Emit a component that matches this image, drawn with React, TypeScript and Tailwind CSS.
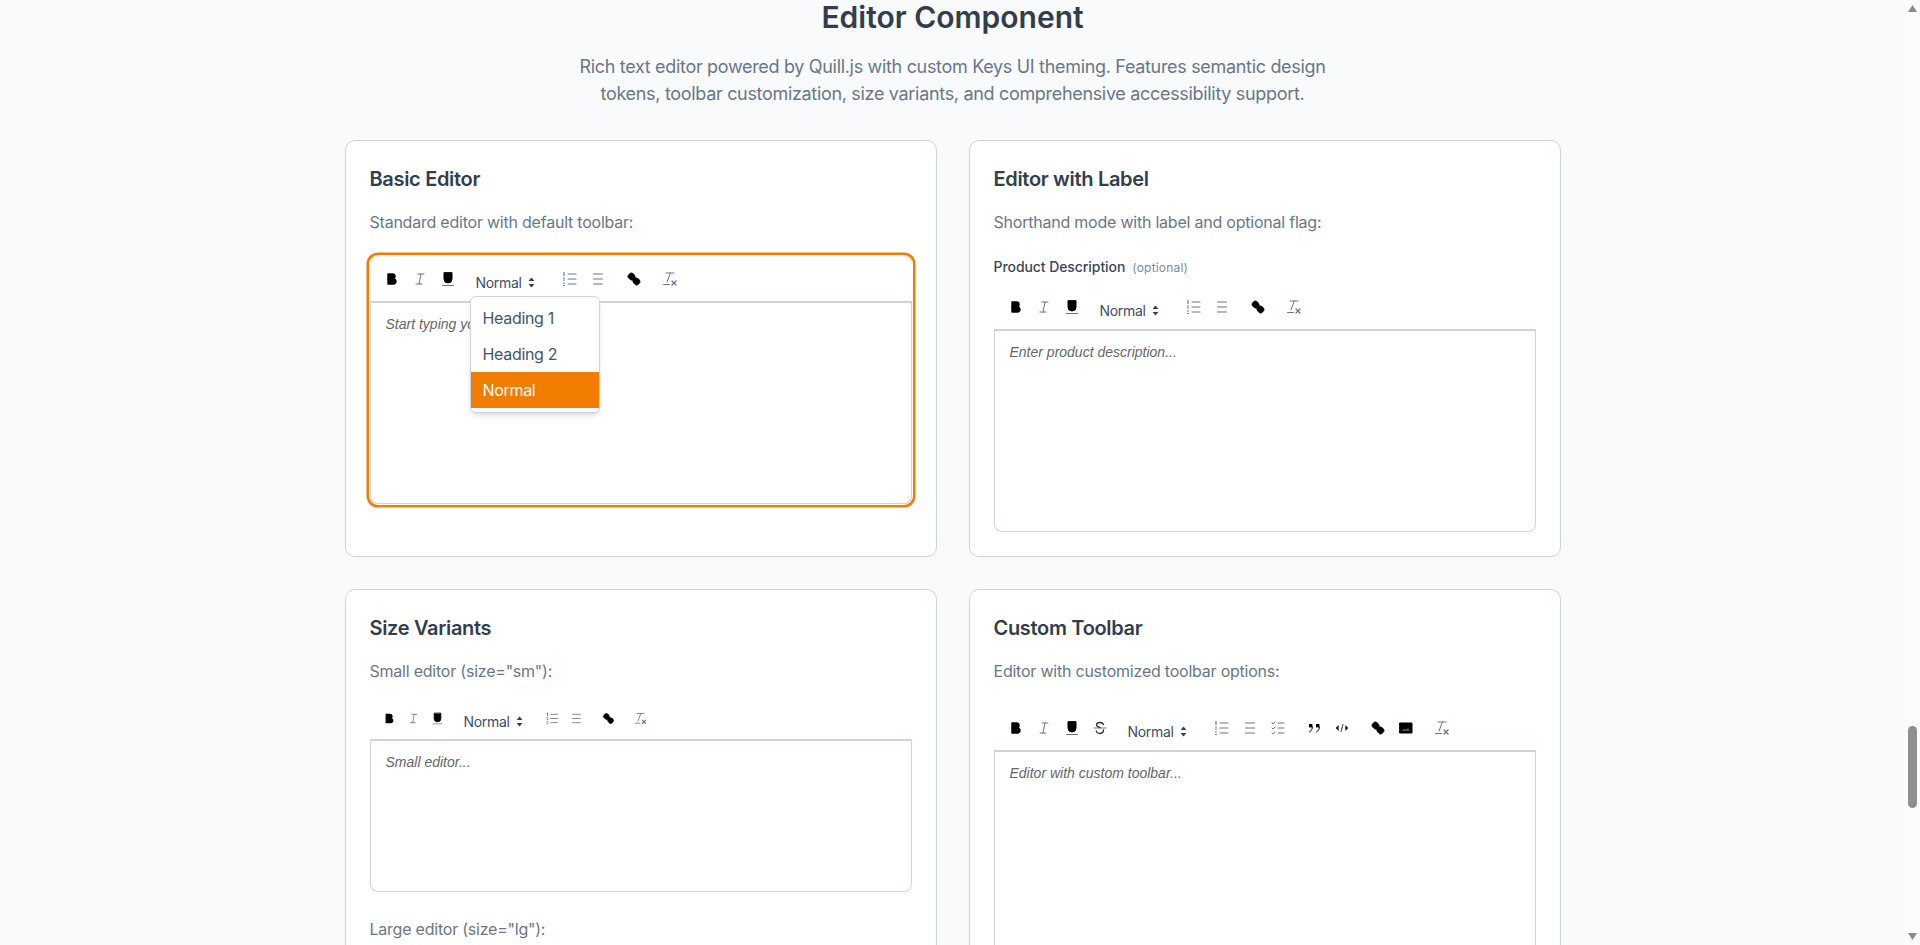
type ToolName =
  | "bold" | "italic" | "underline" | "strike" | "ordered" | "bullet"
  | "check" | "quote" | "code" | "link" | "image" | "clean"

const stroke = "#64748b"

function ToolIcon({ name, small }: { name: ToolName; small?: boolean }) {
  const cls = small ? "w-[15px] h-[15px]" : "w-[18px] h-[18px]"
  return (
    <svg viewBox="0 0 18 18" className={cls} fill="none" stroke={stroke} strokeLinecap="round" strokeLinejoin="round">
      {name === "bold" && (
        <g fill="#000" stroke="#000" strokeWidth="1.4">
          <path d="M5,4H9.5A2.5,2.5,0,0,1,12,6.5v0A2.5,2.5,0,0,1,9.5,9H5V4Z" />
          <path d="M5,9h5.5A2.5,2.5,0,0,1,13,11.5v0A2.5,2.5,0,0,1,10.5,14H5V9Z" />
        </g>
      )}
      {name === "italic" && (
        <g>
          <line x1="7" x2="13" y1="4" y2="4" />
          <line x1="5" x2="11" y1="14" y2="14" />
          <line x1="8" x2="10" y1="14" y2="4" />
        </g>
      )}
      {name === "underline" && (
        <g>
          <path d="M5,3V9a4,4,0,0,0,4,4H9a4,4,0,0,0,4-4V3Z" fill="#000" stroke="#000" />
          <rect x="3" y="15" width="12" height="1" rx="0.5" fill={stroke} stroke="none" />
        </g>
      )}
      {name === "strike" && (
        <g>
          <line x1="3" x2="15" y1="9" y2="9" />
          <path d="M12.5,5.5C12,4 10.5,3.5 9,3.5C7,3.5 5.5,4.5 5.5,6C5.5,7.5 7,8 9,8.5" stroke="#333" strokeWidth="1.3" />
          <path d="M12.5,11C12.7,13 11,14.5 9,14.5C7,14.5 5.6,13.6 5.3,12" stroke="#333" strokeWidth="1.3" />
        </g>
      )}
      {name === "ordered" && (
        <g>
          <line x1="7" x2="15" y1="4" y2="4" />
          <line x1="7" x2="15" y1="9" y2="9" />
          <line x1="7" x2="15" y1="14" y2="14" />
          <line x1="3" x2="3" y1="2.5" y2="5.5" strokeWidth="1.2" />
          <line x1="2.5" x2="3.5" y1="8" y2="8" strokeWidth="1.2" />
          <line x1="2.5" x2="3.5" y1="10" y2="10" strokeWidth="1.2" />
          <line x1="2.5" x2="3.5" y1="13" y2="13" strokeWidth="1.2" />
          <line x1="2.5" x2="3.5" y1="15.5" y2="15.5" strokeWidth="1.2" />
        </g>
      )}
      {name === "bullet" && (
        <g>
          <line x1="4.5" x2="13.5" y1="4" y2="4" />
          <line x1="4.5" x2="13.5" y1="9" y2="9" />
          <line x1="4.5" x2="13.5" y1="14" y2="14" />
        </g>
      )}
      {name === "check" && (
        <g>
          <line x1="9" x2="15" y1="4" y2="4" />
          <polyline points="3 4 4 5 6 3" />
          <line x1="9" x2="15" y1="14" y2="14" />
          <polyline points="3 14 4 15 6 13" />
          <line x1="9" x2="15" y1="9" y2="9" />
          <polyline points="3 9 4 10 6 8" />
        </g>
      )}
      {name === "quote" && (
        <g fill="#000" stroke="none">
          <rect x="4" y="5" width="3.4" height="3.4" />
          <rect x="11" y="5" width="3.4" height="3.4" />
          <path d="M7.4,8c0,4.031-3,5-3,5" fill="none" stroke="#000" />
          <path d="M14.4,8c0,4.031-3,5-3,5" fill="none" stroke="#000" />
        </g>
      )}
      {name === "code" && (
        <g stroke="#333">
          <polygon points="5 7 3 9 5 11" fill="#333" />
          <polygon points="13 7 15 9 13 11" fill="#333" />
          <line x1="10" x2="8" y1="5.5" y2="12.5" />
        </g>
      )}
      {name === "link" && (
        <g fill="#000" stroke="#000">
          <line x1="7" x2="11" y1="7" y2="11" />
          <path d="M8.9,4.577a3.476,3.476,0,0,1,.36,4.679A3.476,3.476,0,0,1,4.577,8.9C3.185,7.5,2.035,6.4,4.217,4.217S7.5,3.185,8.9,4.577Z" />
          <path d="M13.423,9.1a3.476,3.476,0,0,0-4.679-.36,3.476,3.476,0,0,0,.36,4.679c1.392,1.392,2.5,2.542,4.679.36S14.815,10.5,13.423,9.1Z" />
        </g>
      )}
      {name === "image" && (
        <g>
          <rect x="3" y="4" width="12" height="10" fill="#000" stroke="#000" />
          <polyline points="5 12 7 9.5 8.5 10.5 11 9 13 12 5 12" fill="#475569" stroke="none" />
        </g>
      )}
      {name === "clean" && (
        <g>
          <line x1="5" x2="13" y1="3" y2="3" />
          <line x1="6" x2="9.35" y1="12" y2="3" />
          <line x1="11" x2="15" y1="11" y2="15" strokeWidth="1.3" />
          <line x1="15" x2="11" y1="11" y2="15" strokeWidth="1.3" />
          <rect x="2" y="14" width="7" height="1" rx="0.5" fill={stroke} stroke="none" />
        </g>
      )}
    </svg>
  )
}

function Picker({ small }: { small?: boolean }) {
  return (
    <div className={`flex items-center pl-[6px] pt-[6px] text-[14px] leading-[17px] text-[#3f4d63] ${small ? "w-[75px] h-5" : "w-[78px] h-6"}`}>
      <span>Normal</span>
      <svg viewBox="0 0 7 11" className="ml-[6px] w-[7px] h-[11px]" fill="#334155">
        <polygon points="3.5 0.5 6.5 4 0.5 4" />
        <polygon points="3.5 10.5 6.5 7 0.5 7" />
      </svg>
    </div>
  )
}

function Toolbar({ groups, small }: { groups: (ToolName[] | "picker")[]; small?: boolean }) {
  return (
    <div className={`flex items-center gap-2 px-2 ${small ? "pt-[3px] pb-[11px]" : "pt-[11px] pb-[10px]"}`}>
      {groups.map((group, i) =>
        group === "picker" ? (
          <Picker key={i} small={small} />
        ) : (
          <div key={i} className="flex">
            {group.map((name) => (
              <div key={name} className={`flex items-center justify-center ${small ? "w-6 h-5" : "w-7 h-6"}`}>
                <ToolIcon name={name} small={small} />
              </div>
            ))}
          </div>
        )
      )}
    </div>
  )
}

const defaultTools: (ToolName[] | "picker")[] = [
  ["bold", "italic", "underline"],
  "picker",
  ["ordered", "bullet"],
  ["link"],
  ["clean"],
]

const customTools: (ToolName[] | "picker")[] = [
  ["bold", "italic", "underline", "strike"],
  "picker",
  ["ordered", "bullet", "check"],
  ["quote", "code"],
  ["link", "image"],
  ["clean"],
]

function Editor({
  placeholder,
  tools = defaultTools,
  small,
  heightClass = "h-[203px]",
  focused,
}: {
  placeholder: string
  tools?: (ToolName[] | "picker")[]
  small?: boolean
  heightClass?: string
  focused?: boolean
}) {
  return (
    <div className={`relative rounded-lg ${focused ? "shadow-[0_0_0_1px_#fff,0_0_0_3.5px_#f07c00]" : ""}`}>
      <Toolbar groups={tools} small={small} />
      <div className={`border border-t-2 border-[#cbd5e1] rounded-b-lg bg-white px-[15px] pt-[11px] ${heightClass}`}>
        <p className="font-['Liberation_Sans',Arial,sans-serif] tracking-normal italic text-[14px] leading-[21px] text-[#666]">{placeholder}</p>
      </div>
      {focused && (
        <div className="absolute left-[100px] top-[40px] w-[130px] h-[117px] rounded-md border border-[#cbd5e1] bg-white py-[3px] text-[16px] text-[#475569] shadow-md">
          <div className="h-9 pl-3 leading-9">Heading 1</div>
          <div className="h-9 pl-3 leading-9">Heading 2</div>
          <div className="h-9 pl-3 leading-9 bg-[#f07c00] text-white">Normal</div>
        </div>
      )}
    </div>
  )
}

function Card({ title, subtitle, children }: { title: string; subtitle: string; children: React.ReactNode }) {
  return (
    <div className="rounded-[10px] border border-[#cbd5e1] bg-white p-6">
      <h3 className="text-[20px] leading-7 font-semibold text-[#333d4b]">{title}</h3>
      <p className="mt-[17px] mb-[22px] text-[16px] leading-6 tracking-[-0.014em] text-[#6b7785]">{subtitle}</p>
      {children}
    </div>
  )
}

function Scrollbar() {
  return (
    <div className="w-[15px] shrink-0 bg-[#fbfbfb] flex flex-col items-center">
      <svg viewBox="0 0 9 7" className="mt-[5px] w-[9px] h-[7px]" fill="#8a8a8a">
        <polygon points="4.5 0 9 7 0 7" />
      </svg>
      <div className="mt-[714px] w-[9px] h-[82px] rounded-full bg-[#8f8f8f]" />
      <svg viewBox="0 0 9 7" className="mt-[125px] w-[9px] h-[7px]" fill="#8a8a8a">
        <polygon points="0 0 9 0 4.5 7" />
      </svg>
    </div>
  )
}

export default function App() {
  return (
    <div className="h-[945px] overflow-hidden flex bg-[#f8fafc] font-['Inter',sans-serif] tracking-[-0.02em]">
      <main className="flex-1 min-w-0">
        <div className="w-[1216px] mx-auto">
          <h1 className="-mt-px text-center text-[30px] leading-9 font-semibold tracking-normal text-[#333d4b]">Editor Component</h1>
          <p className="mt-[18px] mb-[33px] mx-auto max-w-3xl text-center text-[18px] leading-[27px] text-[#6b7785]">
            Rich text editor powered by Quill.js with custom Keys UI theming. Features semantic design tokens, toolbar customization, size variants, and comprehensive accessibility support.
          </p>
          <div className="grid grid-cols-2 gap-8">
            <Card title="Basic Editor" subtitle="Standard editor with default toolbar:">
              <Editor placeholder="Start typing your content..." focused />
            </Card>
            <Card title="Editor with Label" subtitle="Shorthand mode with label and optional flag:">
              <div className="mb-[5px] flex items-baseline gap-[7px] text-[14px] leading-[22px] tracking-[-0.005em] font-medium text-[#3a4657]">
                Product Description
                <span className="text-[12px] font-normal tracking-[0.015em] text-[#7a8aa0]">(optional)</span>
              </div>
              <Editor placeholder="Enter product description..." />
            </Card>
            <Card title="Size Variants" subtitle={'Small editor (size="sm"):'}>
              <Editor placeholder="Small editor..." small heightClass="h-[153px]" />
              <p className="mt-[25px] text-[16px] leading-6 tracking-[-0.014em] text-[#6b7785]">Large editor (size="lg"):</p>
            </Card>
            <Card title="Custom Toolbar" subtitle="Editor with customized toolbar options:">
              <Editor placeholder="Editor with custom toolbar..." tools={customTools} heightClass="h-[300px]" />
            </Card>
          </div>
        </div>
      </main>
      <Scrollbar />
    </div>
  )
}
